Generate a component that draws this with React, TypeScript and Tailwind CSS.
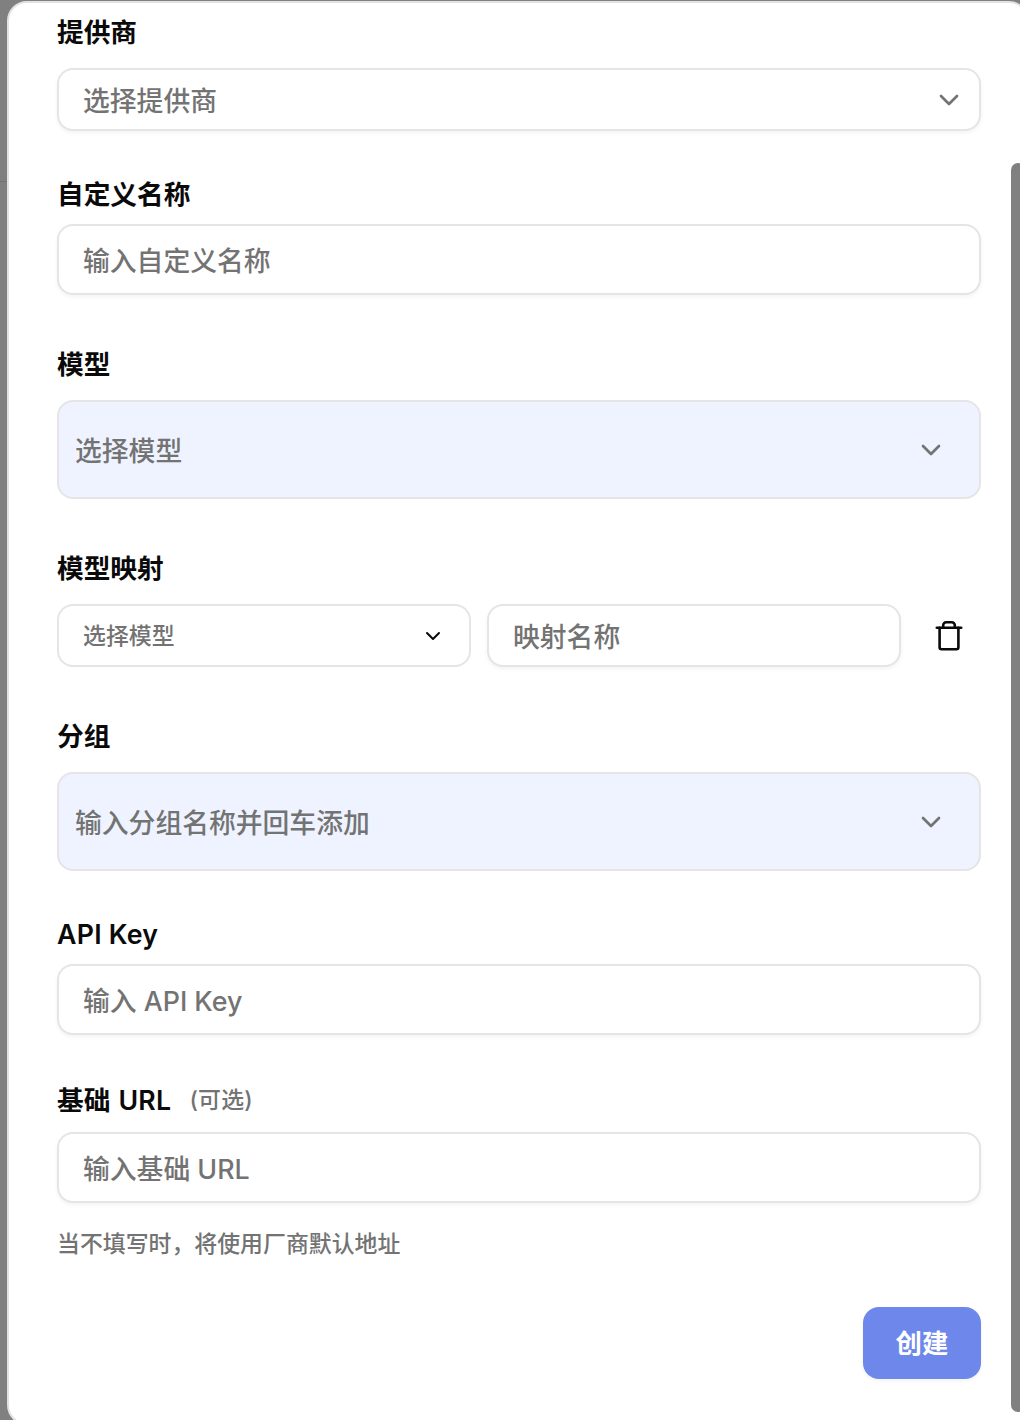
import React, { useState } from 'react';
import { ChevronDown } from 'lucide-react';

const TrashIcon: React.FC = () => (
  <svg width="28" height="32" viewBox="0 0 28 32" fill="none" stroke="#0a0a0a" strokeWidth="2.6" strokeLinecap="round" strokeLinejoin="round">
    <path d="M1.8 7.7h24.4" />
    <path d="M4.6 7.7v19.5a2 2 0 0 0 2 2h14.8a2 2 0 0 0 2-2V7.7" />
    <path d="M8.2 7.7V5.2a3 3 0 0 1 3-3h5.6a3 3 0 0 1 3 3v2.5" />
  </svg>
);

const Label: React.FC<{ children: React.ReactNode }> = ({ children }) => (
  <div className="flex h-7 items-center whitespace-nowrap text-[26.7px] leading-7 font-semibold text-[#0a0a0a]">{children}</div>
);

interface TextFieldProps {
  placeholder: string;
  className: string;
}

const TextField: React.FC<TextFieldProps> = ({ placeholder, className }) => {
  const [value, setValue] = useState('');

  return (
    <input
      className={`block rounded-2xl border-2 border-[#e5e5e5] bg-white px-6 pt-0.5 text-[26.8px] font-[450] text-[#0a0a0a] shadow-[0_2px_4px_rgba(0,0,0,0.05)] outline-none placeholder:text-[#737373] ${className}`}
      placeholder={placeholder}
      value={value}
      onChange={(e) => setValue(e.target.value)}
    />
  );
};

const TagSelect: React.FC<{ placeholder: string }> = ({ placeholder }) => (
  <button className="mt-[22px] flex h-[99px] w-full items-center justify-between rounded-2xl border-2 border-[#e5e5e5] bg-[#eff3ff] pr-8 pl-4 text-[26.8px] font-[450] text-[#737373]">
    <span className="pt-[3px]">{placeholder}</span>
    <ChevronDown size={32} />
  </button>
);

export default function App() {
  return (
    <div className="relative h-[1420px] w-[1020px] overflow-hidden bg-[#808080] font-['Inter','Noto_Sans_CJK_SC',sans-serif]">
      {/* Page divider behind the dialog */}
      <div className="absolute top-[181px] left-0 h-px w-2 bg-[#737373]" />

      {/* Dialog */}
      <div className="absolute top-px left-[7px] h-[1424px] w-[1022px] rounded-[20px] border-2 border-[#e2e2e2] bg-white pt-[15px] pr-[46px] pl-12">
        <Label>提供商</Label>
        <button className="mt-[22px] flex h-[63px] w-full items-center justify-between rounded-2xl border-2 border-[#e5e5e5] bg-white pr-[14px] pl-6 text-[26.8px] font-[450] text-[#737373] shadow-[0_2px_4px_rgba(0,0,0,0.05)]">
          <span className="pt-[3px]">选择提供商</span>
          <ChevronDown size={32} />
        </button>

        <div className="mt-[49px]">
          <Label>自定义名称</Label>
          <TextField placeholder="输入自定义名称" className="mt-4 h-[71px] w-full" />
        </div>

        <div className="mt-[55px]">
          <Label>模型</Label>
          <TagSelect placeholder="选择模型" />
        </div>

        <div className="mt-[55px]">
          <Label>模型映射</Label>
          <div className="mt-[22px] flex items-center">
            <button className="flex h-[63px] w-[414px] items-center justify-between rounded-2xl border-2 border-[#e5e5e5] bg-white pr-6 pl-6 text-[22.9px] font-[450] text-[#737373]">
              <span className="pt-0.5">选择模型</span>
              <ChevronDown size={24} color="#0a0a0a" />
            </button>
            <TextField placeholder="映射名称" className="ml-4 h-[63px] w-[414px]" />
            <button className="ml-[34px]" aria-label="删除">
              <TrashIcon />
            </button>
          </div>
        </div>

        <div className="mt-[55px]">
          <Label>分组</Label>
          <TagSelect placeholder="输入分组名称并回车添加" />
        </div>

        <div className="mt-[49px]">
          <Label>
            <span className="font-[570] tracking-[0.25px]">API Key</span>
          </Label>
          <TextField placeholder="输入 API Key" className="mt-4 h-[71px] w-full" />
        </div>

        <div className="mt-[51px]">
          <Label>
            基础
            <span className="ml-2 font-[570] tracking-[0.3px]">URL</span>
            <span className="ml-[18px] text-[22.9px] font-[450] tracking-[0.2px] text-[#737373]">(可选)</span>
          </Label>
          <TextField placeholder="输入基础 URL" className="mt-[18px] h-[71px] w-full" />
          <p className="mt-[27px] h-7 text-[22.9px] leading-7 font-[450] text-[#737373]">当不填写时，将使用厂商默认地址</p>
        </div>

        <div className="mt-[49px] flex justify-end">
          <button className="h-[72px] w-[118px] rounded-2xl bg-[#6d87ea] pt-0.5 text-[26.4px] font-bold text-white shadow-[0_2px_4px_rgba(0,0,0,0.05)]">创建</button>
        </div>
      </div>

      {/* Scrollbar thumb */}
      <div className="absolute top-[163px] left-[1011px] h-[1249px] w-[14px] rounded-[7px] bg-[#808080]" />
    </div>
  );
}
